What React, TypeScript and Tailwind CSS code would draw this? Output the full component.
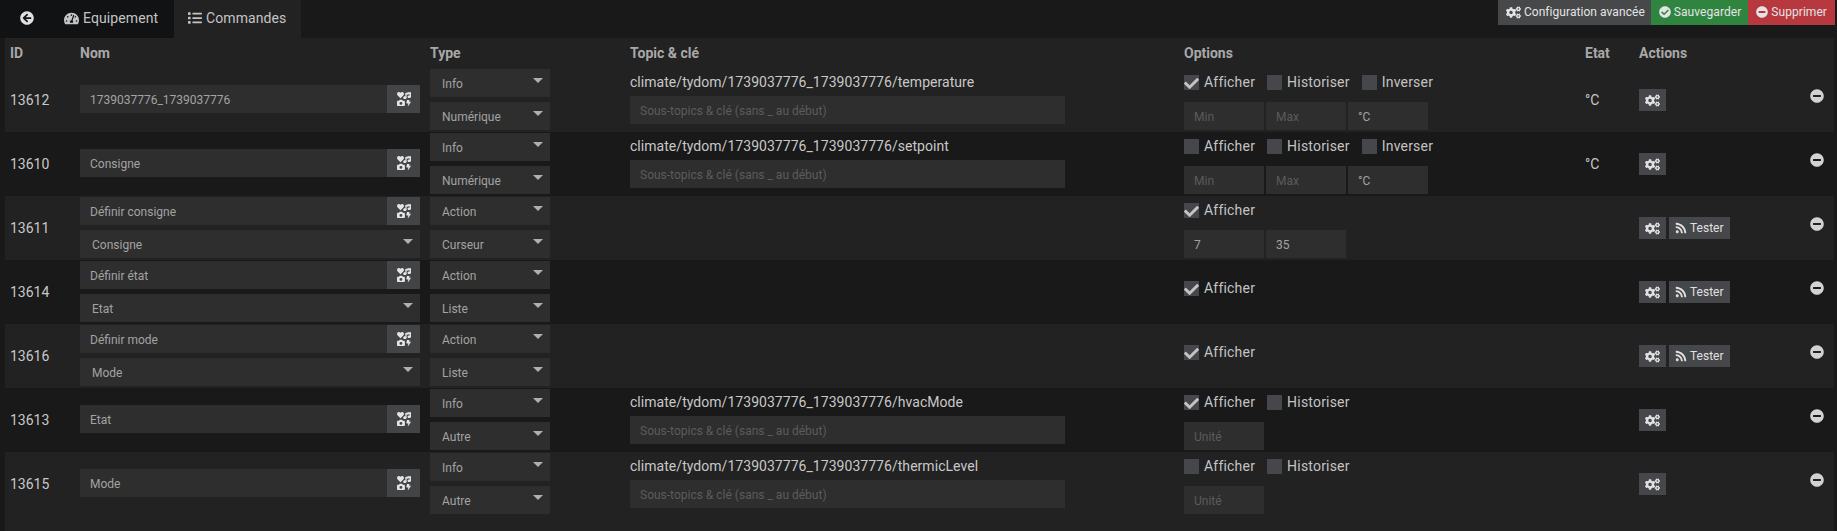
import type { JSX } from "react";
import {
    FaArrowCircleLeft,
    FaCheck,
    FaCheckCircle,
    FaCogs,
    FaIcons,
    FaList,
    FaMinusCircle,
    FaRss,
    FaTachometerAlt,
} from "react-icons/fa";

const gridCols = "grid grid-cols-[75px_350px_200px_554px_401px_54px_1fr]";

interface CheckItem {
    label: string;
    checked: boolean;
}

interface OptionField {
    text: string;
    placeholder?: boolean;
}

interface Cmd {
    id: string;
    name: string;
    link?: string;
    type: string;
    subType: string;
    topic?: string;
    checks: CheckItem[];
    fields?: OptionField[];
    unit?: string;
    test?: boolean;
    dark?: boolean;
    grow?: boolean;
}

const minMax: OptionField[] = [
    { text: "Min", placeholder: true },
    { text: "Max", placeholder: true },
    { text: "°C" },
];

const cmds: Cmd[] = [
    {
        id: "13612", name: "1739037776_1739037776", type: "Info", subType: "Numérique",
        topic: "climate/tydom/1739037776_1739037776/temperature",
        checks: [{ label: "Afficher", checked: true }, { label: "Historiser", checked: false }, { label: "Inverser", checked: false }],
        fields: minMax, unit: "°C",
    },
    {
        id: "13610", name: "Consigne", type: "Info", subType: "Numérique", dark: true,
        topic: "climate/tydom/1739037776_1739037776/setpoint",
        checks: [{ label: "Afficher", checked: false }, { label: "Historiser", checked: false }, { label: "Inverser", checked: false }],
        fields: minMax, unit: "°C",
    },
    {
        id: "13611", name: "Définir consigne", link: "Consigne", type: "Action", subType: "Curseur", test: true,
        checks: [{ label: "Afficher", checked: true }],
        fields: [{ text: "7" }, { text: "35" }],
    },
    {
        id: "13614", name: "Définir état", link: "Etat", type: "Action", subType: "Liste", test: true, dark: true,
        checks: [{ label: "Afficher", checked: true }],
    },
    {
        id: "13616", name: "Définir mode", link: "Mode", type: "Action", subType: "Liste", test: true,
        checks: [{ label: "Afficher", checked: true }],
    },
    {
        id: "13613", name: "Etat", type: "Info", subType: "Autre", dark: true,
        topic: "climate/tydom/1739037776_1739037776/hvacMode",
        checks: [{ label: "Afficher", checked: true }, { label: "Historiser", checked: false }],
        fields: [{ text: "Unité", placeholder: true }],
    },
    {
        id: "13615", name: "Mode", type: "Info", subType: "Autre", grow: true,
        topic: "climate/tydom/1739037776_1739037776/thermicLevel",
        checks: [{ label: "Afficher", checked: false }, { label: "Historiser", checked: false }],
        fields: [{ text: "Unité", placeholder: true }],
    },
];

const Select = ({ text, className }: { text: string; className: string }) => (
    <div className={`flex justify-between h-7 bg-[#2e2e2e] pr-[7px] text-xs text-[#a3a3a3] ${className}`}>
        <span className="self-center pt-px">{text}</span>
        <span className="mt-[9px] w-0 h-0 border-x-[5px] border-x-transparent border-t-[5px] border-t-[#b0b0b0]"></span>
    </div>
);

const NameInput = ({ name }: { name: string }) => (
    <div className="flex h-7 w-[340px] bg-[#2e2e2e] text-xs text-[#a3a3a3]">
        <span className="flex-1 self-center pl-2.5 pt-px">{name}</span>
        <span className="flex items-center justify-center w-[33px] bg-[#434446] text-[#e4e4e4] text-[14px]">
            <FaIcons />
        </span>
    </div>
);

const Check = ({ label, checked }: CheckItem) => (
    <label className="flex items-center gap-[5px]">
        <span className="flex items-center justify-center w-[15px] h-[15px] pt-0.5 bg-[#46474a] text-[#c4c4c4] text-[15px]">
            {checked && <FaCheck />}
        </span>
        <span className="tracking-[0.2px]">{label}</span>
    </label>
);

const ActionButton = ({ icon, text }: { icon: JSX.Element; text?: string }) => (
    <span className="flex items-center justify-center gap-[3px] h-[22px] px-1.5 bg-[#46474a] text-xs text-[#e0e0e0]">
        {icon}
        {text}
    </span>
);

const CmdRow = ({ cmd }: { cmd: Cmd }) => {
    const hasFields = cmd.fields !== undefined;

    return (
        <div className={`${gridCols} items-start ${cmd.grow ? "flex-1" : "h-16"} ${cmd.dark ? "bg-[#191919]" : "bg-[#222222]"}`}>
            <div className="pl-[5px] pt-[22px] text-sm text-[#c8c8c8]">{cmd.id}</div>

            {/* Nom */}
            {cmd.link ? (
                <div className="flex flex-col gap-[5px] pt-px">
                    <NameInput name={cmd.name} />
                    <Select text={cmd.link} className="w-[340px] pl-3" />
                </div>
            ) : (
                <div className="pt-[17px]">
                    <NameInput name={cmd.name} />
                </div>
            )}

            {/* Type */}
            <div className="flex flex-col gap-[5px] pt-px">
                <Select text={cmd.type} className="w-[120px] pl-3" />
                <Select text={cmd.subType} className="w-[120px] pl-3" />
            </div>

            {/* Topic */}
            <div className="pt-1">
                {cmd.topic && (
                    <>
                        <div className="h-6 text-sm leading-5 tracking-[0.04px] text-[#c8c8c8]">{cmd.topic}</div>
                        <div className="flex items-center h-7 w-[435px] bg-[#2e2e2e] pl-2.5 pt-px text-xs text-[#5c5c5c]">
                            Sous-topics &amp; clé (sans _ au début)
                        </div>
                    </>
                )}
            </div>

            {/* Options */}
            <div className={hasFields ? "pt-1" : "pt-[18px]"}>
                <div className="flex gap-3 h-[30px] items-start text-sm text-[#c4c4c4]">
                    {cmd.checks.map((check) => (
                        <Check key={check.label} label={check.label} checked={check.checked} />
                    ))}
                </div>
                {cmd.fields && (
                    <div className="flex gap-0.5">
                        {cmd.fields.map((field, index) => (
                            <div
                                key={index}
                                className={`flex items-center h-7 w-20 bg-[#2e2e2e] pl-2.5 pt-px text-xs ${field.placeholder ? "text-[#5c5c5c]" : "text-[#a3a3a3]"}`}
                            >
                                {field.text}
                            </div>
                        ))}
                    </div>
                )}
            </div>

            {/* Etat */}
            <div className="pt-[22px] text-sm text-[#c8c8c8]">{cmd.unit}</div>

            {/* Actions */}
            <div className="flex justify-between pt-[21px] pr-2.5">
                <div className="flex gap-[3px]">
                    <ActionButton icon={<FaCogs className="text-[15px]" />} />
                    {cmd.test && <ActionButton icon={<FaRss className="text-[12px]" />} text="Tester" />}
                </div>
                <FaMinusCircle className="text-[14px] text-[#d2d2d2]" />
            </div>
        </div>
    );
};

export default function App() {
    return (
        <div className="flex flex-col h-screen bg-[#191919] font-['Roboto',sans-serif] overflow-hidden">
            <div className="flex justify-between h-[38px] pr-[2px]">
                <div className="flex text-sm tracking-[0.1px]">
                    <div className="flex bg-[#111214] text-[#c4c4c4]">
                        <span className="flex items-center w-16 pl-5 pb-0.5 text-[14px] text-[#e0e0e0]">
                            <FaArrowCircleLeft />
                        </span>
                        <span className="flex items-center gap-[4px] w-[110px] pb-0.5">
                            <FaTachometerAlt className="text-[15px]" /> Equipement
                        </span>
                    </div>
                    <div className="flex items-center gap-[4px] w-[127px] pl-[14px] pb-0.5 bg-[#222222] border-b border-b-[#94ca02] h-[39px] text-[#c4c4c4]">
                        <FaList className="text-[14px]" /> Commandes
                    </div>
                </div>
                <div className="flex h-[25px] text-xs tracking-[0.06px] text-[#e4e4e4]">
                    <span className="flex items-center gap-[3px] pl-2 pr-1.5 pb-px bg-[#47484a]">
                        <FaCogs className="text-[15px]" /> Configuration avancée
                    </span>
                    <span className="flex items-center gap-[3px] pl-2 pr-[7px] pb-px bg-[#2f8540]">
                        <FaCheckCircle className="text-[12px]" /> Sauvegarder
                    </span>
                    <span className="flex items-center gap-[3px] pl-2 pr-2 pb-px bg-[#b7393f]">
                        <FaMinusCircle className="text-[12px]" /> Supprimer
                    </span>
                </div>
            </div>

            <div className="flex flex-col flex-1 ml-[5px] mr-[3px]">
                <div className={`${gridCols} items-center h-[30px] bg-[#222222] text-sm font-bold text-[#a8a8a8]`}>
                    <div className="pl-[5px]">ID</div>
                    <div>Nom</div>
                    <div>Type</div>
                    <div>Topic &amp; clé</div>
                    <div>Options</div>
                    <div>Etat</div>
                    <div>Actions</div>
                </div>
                {cmds.map((cmd) => (
                    <CmdRow key={cmd.id} cmd={cmd} />
                ))}
            </div>
        </div>
    );
}
